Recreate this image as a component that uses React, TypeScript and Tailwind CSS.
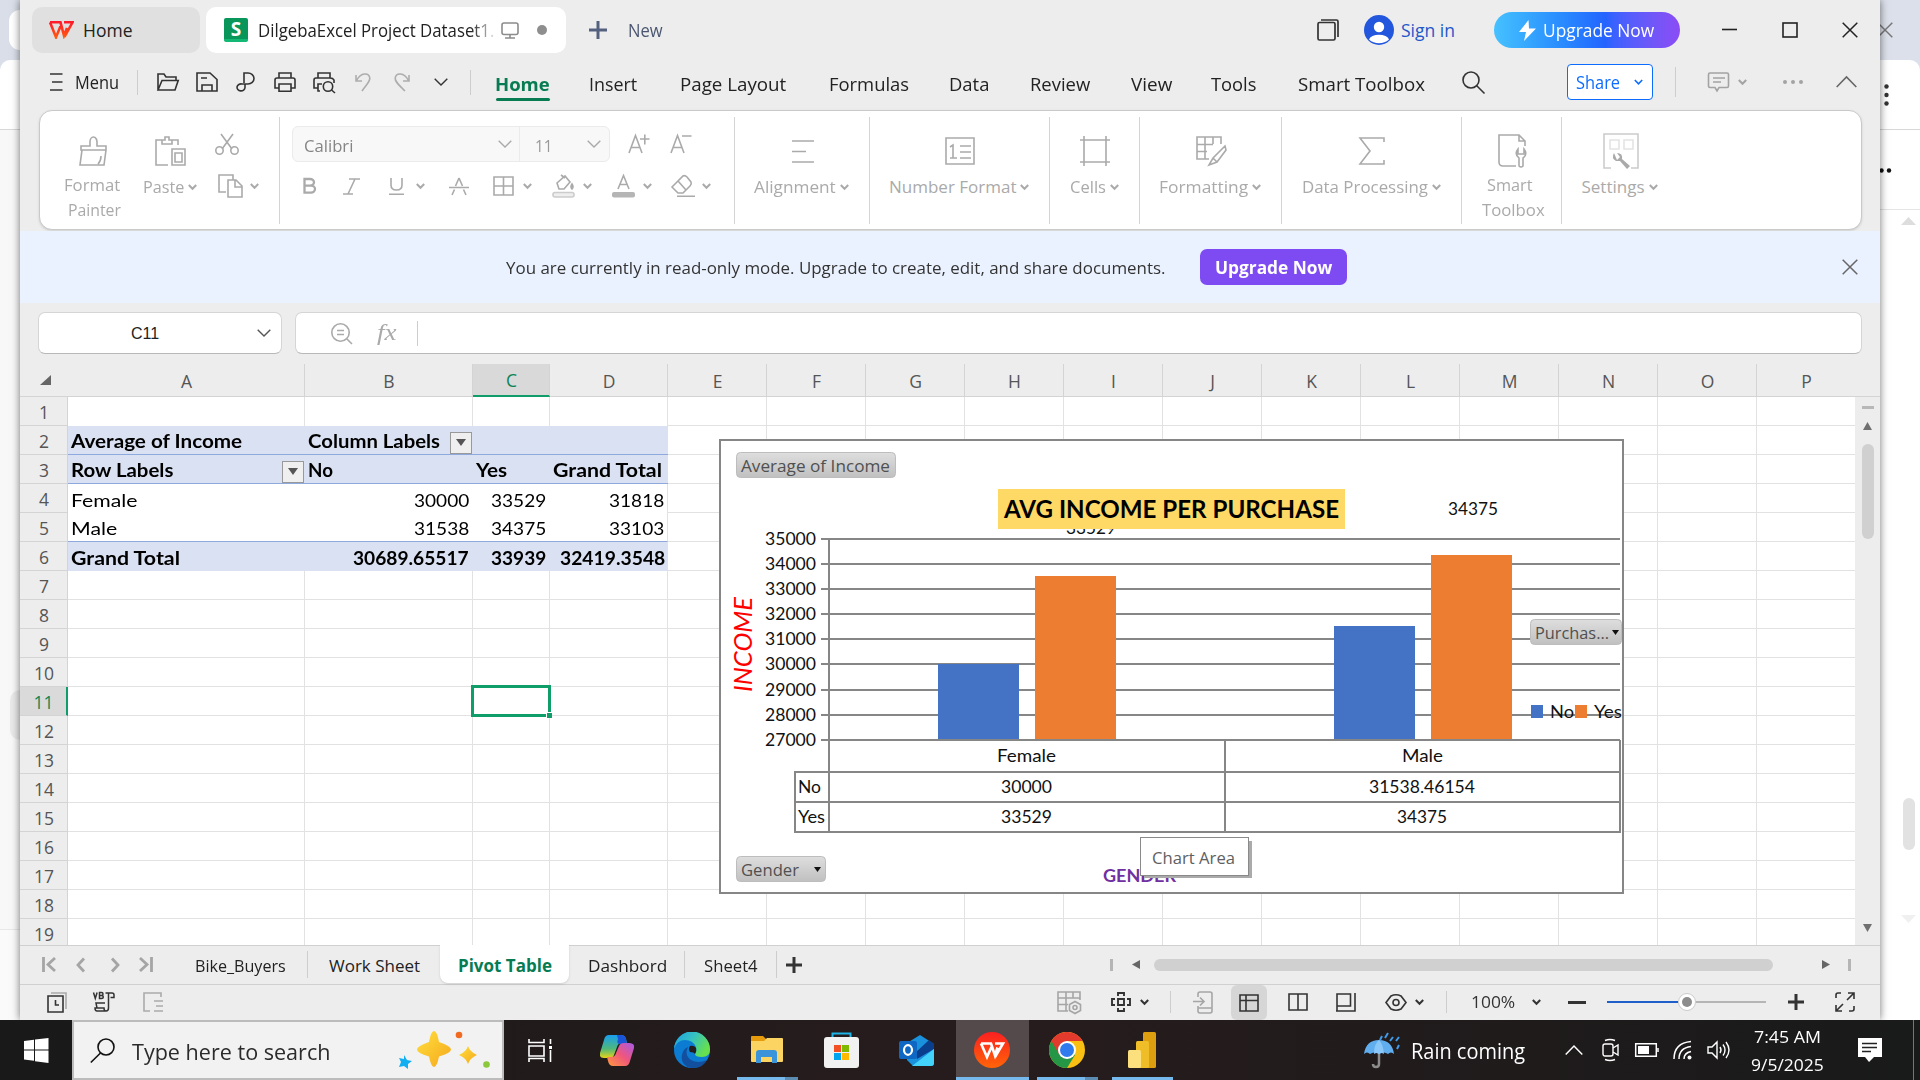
import React, { useLayoutEffect, useRef, useState } from "react";

/* Text stretched or condensed to a given width, keeping its height. */
function Fit({ w, children, className = "" }: { w: number; children: string; className?: string }) {
  const ref = useRef<HTMLSpanElement>(null);
  const [scale, setScale] = useState(1);
  useLayoutEffect(() => {
    if (ref.current) setScale(w / ref.current.offsetWidth);
  }, [w]);
  return (
    <span className={"inline-block shrink-0 whitespace-nowrap " + className} style={{ width: w }}>
      <span ref={ref} className="inline-block origin-left" style={{ transform: `scaleX(${scale})` }}>
        {children}
      </span>
    </span>
  );
}

type IcProps = { w: number; h: number; className?: string; sw?: number; children: React.ReactNode };
function Ic({ w, h, className = "", sw = 1.6, children }: IcProps) {
  return (
    <svg width={w} height={h} viewBox={`0 0 ${w} ${h}`} className={"shrink-0 overflow-visible " + className} fill="none" stroke="currentColor" strokeWidth={sw}>
      {children}
    </svg>
  );
}

const Chev = ({ className = "" }: { className?: string }) => (
  <Ic w={9} h={6} sw={2} className={className}><path d="M.8 1 4.5 4.8 8.2 1" /></Ic>
);
const BigChev = ({ className = "" }: { className?: string }) => (
  <Ic w={14} h={8} sw={1.4} className={className}><path d="M.7.7 7 7 13.3.7" /></Ic>
);
const Cross = ({ className = "" }: { className?: string }) => (
  <Ic w={16} h={16} sw={1.5} className={className}><path d="M.7.7l14.6 14.6M15.3.7.7 15.3" /></Ic>
);
const Vline = ({ className }: { className: string }) => <div className={"w-px shrink-0 bg-[#cdcdcd] " + className} />;

function TitleBar() {
  return (
    <div className="flex h-[60px] items-center text-[17.5px] leading-6">
      <div className="ml-3 flex h-[46px] w-[168px] items-center rounded-[10px] bg-[#e0e0e0]">
        <svg width="25" height="18" viewBox="0 0 25 18" className="ml-[17px]" fill="none">
          <defs><linearGradient id="wl" x1="0" y1="0" x2="0" y2="1"><stop stopColor="#ff1a2b" /><stop offset="1" stopColor="#ff5a10" /></linearGradient></defs>
          <path d="M1 1.3H11.5L15 14.6 18 7M1 1.3 7 16.2 11.5 5.2M15.5 16 23.5 1.3H15" stroke="url(#wl)" strokeWidth="2.6" />
        </svg>
        <Fit w={49} className="ml-[9px] text-[#222]">Home</Fit>
      </div>
      <div className="ml-1.5 flex h-[46px] w-[360px] items-center rounded-[10px] bg-white">
        <div className="ml-[18px] flex h-6 w-6 items-center justify-center rounded-[2px] border-b-[3px] border-[#12b873] bg-[#09965a] text-[19px] font-bold text-white">S</div>
        <div className="ml-2.5 w-[237px] text-[#222] [mask-image:linear-gradient(to_right,black_90%,transparent_101%)]">
          <Fit w={236}>DilgebaExcel Project Dataset1.</Fit>
        </div>
        <Ic w={18} h={17} className="ml-[6px] text-[#8c8c8c]"><rect x="1" y="1" width="16" height="11.5" rx="2" /><path d="M9 12.5v3M4 16h10" /></Ic>
        <div className="ml-[18px] h-2.5 w-2.5 rounded-full bg-[#8e8e8e]" />
      </div>
      <Ic w={18} h={18} sw={3} className="ml-[23px] text-[#53617f]"><path d="M0 9h18M9 0v18" /></Ic>
      <Fit w={35} className="ml-[21px] text-[#4a5670]">New</Fit>
      <Ic w={22} h={22} sw={1.7} className="ml-[654px] text-[#333]"><rect x="1" y="3.500" width="17" height="17.500" rx="1.500" /><path d="M4 1h15.500q1.500 0 1.500 1.500V18" /></Ic>
      <svg width="30" height="30" viewBox="0 0 30 30" className="ml-[25px]"><circle cx="15" cy="15" r="15" fill="#2257dd" /><circle cx="15" cy="12" r="5.200" fill="#fff" /><path d="M5 24.500a10.200 6 0 0 1 20 0 15 15 0 0 1-20 0z" fill="#fff" /></svg>
      <Fit w={54} className="ml-[7px] text-[#2257c9]">Sign in</Fit>
      <div className="ml-[39px] flex h-9 w-[186px] items-center rounded-full bg-gradient-to-r from-[#46c1ff] via-[#2563ff] via-60% to-[#8b4cf5] text-white">
        <svg width="17" height="21" viewBox="0 0 17 21" className="ml-[25px]"><path d="M9.500 0 0 12h7l-2 9L17 8.500h-7z" fill="#fff" /></svg>
        <Fit w={111} className="ml-[7px]">Upgrade Now</Fit>
      </div>
      <Ic w={15} h={16} className="ml-[42px] text-[#222]"><path d="M0 7.500h15" /></Ic>
      <Ic w={16} h={16} sw={1.6} className="ml-[45px] text-[#222]"><rect x="1" y="1" width="14" height="14" /></Ic>
      <Cross className="ml-[44px] text-[#222]" />
    </div>
  );
}

const menuTabs: [string, number, string][] = [
  ["Insert", 48, "ml-[39px]"],
  ["Page Layout", 106, "ml-[43px]"],
  ["Formulas", 80, "ml-[43px]"],
  ["Data", 40, "ml-[40px]"],
  ["Review", 60, "ml-[41px]"],
  ["View", 41, "ml-[41px]"],
  ["Tools", 45, "ml-[39px]"],
  ["Smart Toolbox", 127, "ml-[42px]"],
];

function MenuRow() {
  return (
    <div className="flex h-[44px] items-center text-[17.5px] leading-6 text-[#333]">
      <Ic w={13} h={18} className="ml-[30px]"><path d="M0 1h12.500M2 9h10.500M0 17h12.500" /></Ic>
      <Fit w={44} className="ml-[12px] text-[#222]">Menu</Fit>
      <Vline className="ml-[18px] h-[25px]" />
      <Ic w={22} h={18} className="ml-[19px]"><path d="M1 17V1h6l2 3h10v3.500M1 17 5 7.500h16.200L18 17z" /></Ic>
      <Ic w={22} h={20} className="ml-[17px]"><path d="M1 1h13l7 6.500V19H1zM6 19v-6h10v6M5 6h6" /></Ic>
      <Ic w={18} h={20} className="ml-[19px]"><path d="M7 11V1h4a6 5.500 0 0 1 0 11H5a4 3.500 0 1 0 3 3.500V12" /></Ic>
      <Ic w={22} h={20} className="ml-[19px]"><path d="M5 6V1h12v5M5 16H1V8q0-2 2-2h16q2 0 2 2v8h-4M5 12h12v7.200H5z" /></Ic>
      <Ic w={23} h={21} className="ml-[17px]"><path d="M5 6V1h12v5M7 19H5V12h4M5 16H1V8q0-2 2-2h14q3 0 4 2v3" /><circle cx="15" cy="14.500" r="4.700" /><path d="m18.500 18 3.500 3" /></Ic>
      <Ic w={16} h={18} className="ml-[19px] text-[#adadad]"><path d="M1 2v6h6M1.500 7.500C6-1 14-.5 14.800 5 15 9 11 12 7 18" /></Ic>
      <Ic w={16} h={18} className="ml-[23px] text-[#adadad]"><path d="M15 2v6H9M14.500 7.500C10-1 2-.5 1.200 5 1 9 5 12 11 18" /></Ic>
      <BigChev className="ml-[24px]" />
      <Vline className="ml-[22px] h-[25px]" />
      <div className="mt-[9px] ml-[24px] flex flex-col items-center">
        <Fit w={55} className="font-bold text-[#077c52]">Home</Fit>
        <div className="mt-[2px] h-[3px] w-[54px] rounded bg-[#077c52]" />
      </div>
      {menuTabs.map(([t, w, m]) => (
        <div key={t} className={"pt-1 text-[#222] " + m}><Fit w={w}>{t}</Fit></div>
      ))}
      <Ic w={23} h={23} className="ml-[37px]"><circle cx="9" cy="9" r="8" /><path d="m14.500 14.500 8 8" /></Ic>
      <div className="ml-[82px] flex h-9 w-[86px] items-center rounded-[4px] border border-[#0b6cff] bg-white text-[#0b6cff]">
        <Fit w={44} className="ml-[8px]">Share</Fit>
        <Ic w={9} h={6} className="ml-[14px]"><path d="M.8 1 4.500 4.800 8.200 1" /></Ic>
      </div>
      <Vline className="ml-[22px] h-[30px]" />
      <Ic w={21} h={20} className="ml-[32px] text-[#a3a3a3]"><path d="M2 1h17q1.500 0 1.500 1.500V14q0 1.500-1.500 1.500h-8l-2 3.500-2-3.500H2q-1.500 0-1.500-1.500V2.500Q.5 1 2 1zM5 6h12M5 10h8" /></Ic>
      <Chev className="ml-[9px] text-[#a3a3a3]" />
      <Ic w={20} h={4} className="ml-[36px] text-[#a3a3a3]"><g fill="currentColor" stroke="none"><circle cx="2" cy="2" r="2" /><circle cx="10" cy="2" r="2" /><circle cx="18" cy="2" r="2" /></g></Ic>
      <Ic w={21} h={12} className="ml-[33px] text-[#666]"><path d="M.7 11 10.500 1l9.800 10" /></Ic>
    </div>
  );
}

function Group({ icon, label, w, width }: { icon: React.ReactNode; label: string; w: number; width: string }) {
  return (
    <div className={"flex shrink-0 flex-col items-center " + width}>
      <div className="mt-[22px] flex h-[36px] items-center">{icon}</div>
      <div className="mt-[5px] flex h-[25px] items-center pr-[2px]">
        <Fit w={w}>{label}</Fit>
        <Chev className="ml-1" />
      </div>
    </div>
  );
}

const Sep = () => <div className="-ml-px mt-[6px] h-[107px] w-px shrink-0 bg-[#d4d4d4]" />;

function Ribbon() {
  return (
    <div className="mt-[6px] ml-[19px] flex h-[120px] w-[1823px] rounded-[13px] border border-[#c9c9c9] bg-white text-[17px] leading-[25px] text-[#aaa] shadow-sm">
      <div className="flex w-[240px] shrink-0">
        <div className="mt-[25px] ml-[24px] flex w-[57px] flex-col items-center">
          <Ic w={29} h={30} className="ml-[2px]"><path d="M2 14V10h9V6a3.500 5 0 1 1 7 0v4h9v4zM3 14 1 29h24l2-15M19 28q3-3 3-8" /></Ic>
          <Fit w={56} className="mt-1.5 mr-px">Format</Fit>
          <Fit w={53} className="ml-1">Painter</Fit>
        </div>
        <div className="mt-[25px] ml-[22px] flex w-[54px] flex-col">
          <Ic w={31} h={30} className="ml-3"><path d="M7 4H1v25h12M17 4h6v5M7 8V4h3V1h4v3h3v4zM17 13h13v16H17zM20 17h7v9h-7z" /></Ic>
          <div className="mt-[8px] flex items-center"><Fit w={41}>Paste</Fit><Chev className="ml-1" /></div>
        </div>
        <div className="mt-[23px] ml-[18px] flex flex-col">
          <Ic w={24} h={21}><path d="m6 0 11 15M18 0 7 15" /><circle cx="4.500" cy="16.500" r="3.700" /><circle cx="19.500" cy="16.500" r="3.700" /></Ic>
          <div className="mt-[19px] ml-[3px] flex items-center">
            <Ic w={25} h={24}><path d="M8 18H1V1h14v5M10 6h8l6 6v11H10zM17 6v7h7" /></Ic>
            <Chev className="ml-[7px]" />
          </div>
        </div>
      </div>
      <Sep />
      <div className="w-[455px] shrink-0">
        <div className="mt-[15px] ml-[12px] flex items-center">
          <div className="flex h-9 w-[318px] items-center rounded-[6px] border border-[#ebebeb] bg-[#f8f8f8]">
            <Fit w={49} className="mt-0.5 ml-[11px] text-[#858585]">Calibri</Fit>
            <BigChev className="ml-[145px]" />
            <div className="ml-[7px] h-full w-px bg-[#ebebeb]" />
            <Fit w={17} className="mt-0.5 ml-[15px] text-[#999]">11</Fit>
            <BigChev className="ml-[35px]" />
          </div>
          <Ic w={22} h={20} className="ml-[18px]"><path d="M1 19 7.500 1.500 14 19M3.500 13.500h8M12 5h9.500M16.800.5v10" /></Ic>
          <Ic w={22} h={20} className="ml-[20px]"><path d="M1 19 7.500 1.500 14 19M3.500 13.500h8M12 2h9.500" /></Ic>
        </div>
        <div className="mt-[12px] ml-[23px] flex h-6 items-center">
          <Ic w={13} h={16} sw={2.300}><path d="M1.500 1H7a4 3.300 0 0 1 0 6.600H1.500zM1.500 7.600H8a4 3.500 0 0 1 0 7H1.500z" /></Ic>
          <Ic w={17} h={17} className="ml-[27px]"><path d="M6 1h11M0 16h10M12 1 5 16" /></Ic>
          <Ic w={15} h={17} className="ml-[29px]"><path d="M2 0v7q0 5 5.500 5T13 7V0M0 16.300h15" /></Ic>
          <Chev className="ml-[12px]" />
          <Ic w={20} h={18} className="ml-[24px]"><path d="M0 10.500h20M10 1 6.500 9M10 1l3.500 8M5.500 12.500 3 18M14.500 12.500 17 18" /></Ic>
          <Ic w={21} h={20} className="ml-[24px]"><path d="M1 1h19v18H1zM10.500 1v18M1 10h19" /></Ic>
          <Chev className="ml-[9px]" />
          <Ic w={23} h={24} className="ml-[20px]"><path d="M5 9 13 2l5 6-6 7H7zM9 1l4 3" /><path d="M20 10q2 3 0 5-2-2 0-5z" fill="currentColor" /><rect x="1" y="18.500" width="21" height="4.500" rx="2" fill="#eee" stroke="#ccc" /></Ic>
          <Chev className="ml-[8px]" />
          <Ic w={23} h={24} className="ml-[20px]"><path d="M6 15 11.500 1.500 17 15M8 10.500h7" /><rect x="0" y="18" width="23" height="5.500" rx="2" fill="#b5b5b5" stroke="none" /></Ic>
          <Chev className="ml-[8px]" />
          <Ic w={24} h={22} className="ml-[19px]"><path d="m1 12 11-11q2-1 4 1l4 5q1 2-1 4l-7 7H7zM7 6l8 9M6 21.300h18" /></Ic>
          <Chev className="ml-[7px]" />
        </div>
      </div>
      <Sep />
      <Group width="w-[135px]" label="Alignment" w={82} icon={<Ic w={22} h={23}><path d="M0 1h22M0 11.500h14M0 22h22" /></Ic>} />
      <Sep />
      <Group width="w-[180px]" label="Number Format" w={127} icon={<Ic w={30} h={28}><path d="M1 1h28v26H1zM5 10l3-2v13M5 21h7M15 9h11M15 15h11M15 21h11" /></Ic>} />
      <Sep />
      <Group width="w-[90px]" label="Cells" w={36} icon={<Ic w={30} h={30}><path d="M4 0v30M26 0v30M0 4h30M0 26h30" /></Ic>} />
      <Sep />
      <Group width="w-[142px]" label="Formatting" w={89} icon={<Ic w={30} h={30}><path d="M13 23H1V1h24v7M1 8.500h16M1 15.500h10M9 1v22M17 1v7M29 10 17 22l-4 7 8-3 9-12zM17 22l4 4" /></Ic>} />
      <Sep />
      <Group width="w-[180px]" label="Data Processing" w={126} icon={<Ic w={26} h={28}><path d="M25 5V1H1l10 13L1 27h24v-4" /></Ic>} />
      <Sep />
      <div className="flex w-[100px] shrink-0 flex-col items-center">
        <Ic w={31} h={35} className="mt-[22px] ml-0.5"><path d="M18 33H5q-4 0-4-4V2h20l6 6v5M21 2v6h6M20 16q-4 5 1 9v8q2 2 4 0v-8q5-4 1-9v5h-6z" /></Ic>
        <Fit w={46} className="mt-1 mr-1">Smart</Fit>
        <Fit w={63} className="ml-[2px]">Toolbox</Fit>
      </div>
      <Sep />
      <Group width="w-[117px]" label="Settings" w={63} icon={
        <Ic w={36} h={36}>
          <path d="M8 35H1V1h34v34h-7" stroke="#ccc" />
          <path d="M7 7h9v9H7zM21 7h9v9h-9z" stroke="#e4e4e4" />
          <path d="M11 20q-3 5 2 8l4 0 7 8 3-3-8-7q1-6-5-6l3 4-3 3z" fill="currentColor" stroke="none" />
        </Ic>} />
    </div>
  );
}

function Banner() {
  return (
    <div className="mt-px flex h-[72px] items-center bg-[#ebf2ff] text-[17px] leading-6">
      <Fit w={659} className="mt-0.5 ml-[486px] text-[#333]">You are currently in read-only mode. Upgrade to create, edit, and share documents.</Fit>
      <div className="ml-[35px] flex h-9 w-[147px] items-center justify-center rounded-[7px] bg-[#7e4bf3] font-bold text-white">
        <Fit w={117} className="mt-0.5">Upgrade Now</Fit>
      </div>
      <Cross className="ml-[495px] text-[#666]" />
    </div>
  );
}

function FormulaBar() {
  return (
    <div className="mt-[9px] flex h-[42px] text-[#aaa]">
      <div className="ml-[18px] flex w-[244px] items-center rounded-[7px] border border-[#d5d5d5] border-b-[#b8b8b8] bg-white">
        <Fit w={28} className="mt-0.5 ml-[92px] font-['Liberation_Sans'] text-[16px] text-[#222]">C11</Fit>
        <BigChev className="ml-[98px] text-[#555]" />
      </div>
      <div className="ml-[13px] flex w-[1567px] items-center rounded-[7px] border border-[#d5d5d5] border-b-[#b8b8b8] bg-white">
        <Ic w={22} h={21} className="ml-[35px]"><circle cx="9.500" cy="9.500" r="8.700" /><path d="M6 7.500h7M6 11.500h7M16 16l5 5" /></Ic>
        <Fit w={20} className="ml-[24px] font-['Liberation_Serif'] text-[23px] leading-6 italic">fx</Fit>
        <Vline className="ml-[20px] h-[25px]" />
      </div>
    </div>
  );
}

const colWidths = [
  "w-[237px]", "w-[168px]", "w-[77px]", "w-[118px]", "w-[99px]", "w-[99px]", "w-[99px]", "w-[99px]",
  "w-[99px]", "w-[99px]", "w-[99px]", "w-[99px]", "w-[99px]", "w-[99px]", "w-[99px]", "w-[98px]",
];
const letters = "ABCDEFGHIJKLMNOP".split("");

type Cell = { t: string; w: number; r?: boolean; drop?: boolean };
const pivot: Record<number, (Cell | null)[]> = {
  2: [{ t: "Average of Income", w: 171 }, { t: "Column Labels", w: 132, drop: true }, null, null],
  3: [{ t: "Row Labels", w: 102, drop: true }, { t: "No", w: 25 }, { t: "Yes", w: 31 }, { t: "Grand Total", w: 109 }],
  4: [{ t: "Female", w: 66 }, { t: "30000", w: 55, r: true }, { t: "33529", w: 55, r: true }, { t: "31818", w: 55, r: true }],
  5: [{ t: "Male", w: 46 }, { t: "31538", w: 55, r: true }, { t: "34375", w: 55, r: true }, { t: "33103", w: 55, r: true }],
  6: [{ t: "Grand Total", w: 109 }, { t: "30689.65517", w: 116, r: true }, { t: "33939", w: 55, r: true }, { t: "32419.3548", w: 105, r: true }],
};

function cellLook(row: number, col: number) {
  if (col < 4 && row > 1 && row < 7) {
    if (row === 2 || row === 3) return "bg-[#d9e1f2] border-b border-[#8ea9db] font-bold";
    if (row === 6) return "bg-[#d9e1f2] font-bold";
    return "bg-white " + (row === 5 ? "border-b border-b-[#8ea9db] " : "") + (col === 3 ? "border-r border-r-[#e2e2e2]" : "");
  }
  if (col < 4 && row === 1) return "bg-white border-r border-[#e2e2e2]";
  if (col === 15) return "bg-white border-b border-[#e2e2e2]";
  return "bg-white border-r border-b border-[#e2e2e2]";
}

const Drop = () => (
  <div className="mt-[5px] mr-px ml-auto flex h-[22px] w-[22px] shrink-0 items-center justify-center border border-[#999] bg-[#efefef]">
    <svg width="10" height="7" viewBox="0 0 10 7"><path d="M0 0h10L5 7z" fill="#555" /></svg>
  </div>
);

function Sheet() {
  return (
    <div className="relative mt-[10px] flex h-[581px]">
      <div className="h-[581px] w-[1835px] overflow-hidden">
        <div className="flex h-[33px] border-b border-[#d4d4d4] text-[17.500px] text-[#555]">
          <div className="flex w-[48px] shrink-0 items-center pl-5"><svg width="11" height="10" viewBox="0 0 11 10"><path d="M11 0v10H0z" fill="#666" /></svg></div>
          {letters.map((l, i) => (
            <div key={l} className={"flex shrink-0 items-center justify-center border-r border-[#d4d4d4] pt-[2px] pl-px " + colWidths[i] + (l === "C" ? " h-[33px] border-b-2 border-b-[#0f9d6a] bg-[#d9d9d9] text-[#0c8457]" : i === 15 ? " border-r-0" : "")}>{l}</div>
          ))}
        </div>
        {Array.from({ length: 19 }, (_, k) => k + 1).map((row) => (
          <div key={row} className="flex h-[29px]">
            <div className={"flex w-[48px] shrink-0 items-center justify-center border-b border-[#d4d4d4] pt-[2px] pl-px text-[17.500px] " + (row === 11 ? "border-r-2 border-r-[#0f9d6a] bg-[#dadada] text-[#0c8457]" : "border-r text-[#555]")}>{String(row)}</div>
            {colWidths.map((w, col) => {
              const c = pivot[row]?.[col];
              const sel = row === 11 && col === 2;
              return (
                <div key={col} className={"relative flex shrink-0 items-center font-[Lato] text-[18px] leading-6 text-black " + w + " " + cellLook(row, col) + (c?.r ? " justify-end " + (col === 3 ? "pr-[3px]" : "pr-[4px]") : " pl-[3px]")}>
                  {c && <Fit w={c.w} className="mt-[2px]">{c.t}</Fit>}
                  {c?.drop && <Drop />}
                  {sel && (
                    <div className="absolute -top-[2px] -left-[2px] z-10 h-[32px] w-[80px] border-[3px] border-[#0f9d6a]">
                      <div className="absolute -right-[4px] -bottom-[4px] h-[6px] w-[6px] border-t border-l border-white bg-[#0f9d6a]" />
                    </div>
                  )}
                </div>
              );
            })}
          </div>
        ))}
      </div>
      <div className="mt-[32px] flex w-[25px] flex-col items-center border-t border-[#d4d4d4] bg-[#ededed] pt-[9px]">
        <div className="h-[3px] w-3 bg-[#b8b8b8]" />
        <svg width="9" height="8" viewBox="0 0 9 8" className="mt-[13px]"><path d="M4.500 0 9 8H0z" fill="#707070" /></svg>
        <div className="mt-[14px] h-[95px] w-3 rounded-full bg-[#d0d0d0]" />
        <svg width="9" height="8" viewBox="0 0 9 8" className="mt-[385px]"><path d="M4.500 8 9 0H0z" fill="#707070" /></svg>
      </div>
      <div className="absolute top-[75px] left-[699px]"><Chart /></div>
    </div>
  );
}

function T({ x, y, w, s = 16.5, f = "#111", b, children }: { x: number; y: number; w: number; s?: number; f?: string; b?: boolean; children: string }) {
  return <text x={x} y={y} textLength={w} lengthAdjust="spacingAndGlyphs" fontSize={s} fill={f} fontWeight={b ? 700 : 400}>{children}</text>;
}

function PivotButton({ x, y, w, tw, arrow, children }: { x: number; y: number; w: number; tw: number; arrow?: number; children: string }) {
  return (
    <g className="font-['Open_Sans']">
      <rect x={x + 0.5} y={y + 0.5} width={w - 1} height={25} rx={4} fill="url(#pb)" stroke="#bdbdbd" />
      <T x={x + 5} y={y + 20} w={tw} s={17} f="#505050">{children}</T>
      {arrow && <path d={`M${arrow} ${y + 11}h7l-3.500 5z`} fill="#111" />}
    </g>
  );
}

const ticks = [539, 564, 589, 614, 639, 664, 690, 715, 740];

function Chart() {
  return (
    <svg width="905" height="455" viewBox="719 439 905 455" className="font-[Lato]">
      <defs><linearGradient id="pb" x1="0" y1="0" x2="0" y2="1"><stop stopColor="#dedede" /><stop offset="1" stopColor="#c0c0c0" /></linearGradient></defs>
      <rect x="720" y="440" width="903" height="453" fill="#fff" stroke="#868686" strokeWidth="2" />
      <path d={ticks.map((y) => `M821 ${y}H1620`).join("")} stroke="#868686" strokeWidth="2" />
      <rect x="938" y="664" width="81" height="75" fill="#4472c4" />
      <rect x="1035" y="576" width="81" height="163" fill="#ed7d31" />
      <rect x="1334" y="626" width="81" height="113" fill="#4472c4" />
      <rect x="1431" y="555" width="81" height="184" fill="#ed7d31" />
      <path d="M829 538V832M795 772H1620M795 802H1620M794 832H1621M795 771V832M1225 740V832M1620 740V832" stroke="#868686" strokeWidth="2" />
      {ticks.map((y, i) => <T key={y} x={765} y={y + 5.5} w={51}>{String(35000 - i * 1000)}</T>)}
      <T x={997} y={762} w={59}>Female</T>
      <T x={1402} y={762} w={41}>Male</T>
      <T x={798} y={793} w={23}>No</T>
      <T x={798} y={823} w={27}>Yes</T>
      <T x={1001} y={793} w={51}>30000</T>
      <T x={1001} y={823} w={51}>33529</T>
      <T x={1369} y={793} w={106}>31538.46154</T>
      <T x={1397} y={823} w={50}>34375</T>
      <T x={1066} y={534} w={50}>33529</T>
      <T x={1448} y={515} w={50}>34375</T>
      <rect x="998" y="489" width="347" height="40" fill="#ffd966" />
      <T x={1004} y={518} w={335} s={25} f="#000" b>AVG INCOME PER PURCHASE</T>
      <text transform="translate(752 692) rotate(-90)" textLength="95" lengthAdjust="spacingAndGlyphs" fontSize="25" fill="#f00" fontStyle="italic">INCOME</text>
      <T x={1103} y={882} w={73} f="#7030a0" b>GENDER</T>
      <PivotButton x={736} y={452} w={160} tw={149}>Average of Income</PivotButton>
      <PivotButton x={736} y={856} w={90} tw={58} arrow={814}>Gender</PivotButton>
      <PivotButton x={1530} y={619} w={92} tw={74} arrow={1612}>Purchas...</PivotButton>
      <rect x="1531" y="705" width="12" height="13" fill="#4472c4" />
      <T x={1550} y={718} w={24}>No</T>
      <rect x="1575" y="705" width="12" height="13" fill="#ed7d31" />
      <T x={1594} y={718} w={28}>Yes</T>
      <rect x="1144" y="841" width="108" height="37" fill="#aaa" />
      <rect x="1140.5" y="837.500" width="108" height="38" fill="#fff" stroke="#8a8a8a" />
      <g className="font-['Open_Sans']"><T x={1152} y={864} w={83} s={17} f="#606060">Chart Area</T></g>
    </svg>
  );
}

function SheetTabs() {
  return (
    <div className="flex h-[40px] border-t border-b border-[#d0d0d0] text-[17px] leading-6 text-[#222]">
      <div className="flex h-[37px] items-center text-[#a5a5a5]">
        <Ic w={14} h={15} sw={2.800} className="ml-[22px]"><path d="M1.500 0v15M13 1 6 7.500l7 6.500" /></Ic>
        <Ic w={8} h={14} sw={2.800} className="ml-[21px]"><path d="M7 .5 1 7l6 6.500" /></Ic>
        <Ic w={8} h={14} sw={2.800} className="ml-[26px]"><path d="m1 .5 6 6.500-6 6.500" /></Ic>
        <Ic w={14} h={15} sw={2.800} className="ml-[20px]"><path d="M12.500 0v15M1 1l7 6.500L1 14" /></Ic>
      </div>
      <Fit w={91} className="mt-[8px] ml-[42px]">Bike_Buyers</Fit>
      <Vline className="mt-[5px] ml-[21px] h-[27px]" />
      <Fit w={91} className="mt-[8px] ml-[21px]">Work Sheet</Fit>
      <div className="-mt-px ml-[20px] flex h-[38px] w-[129px] items-center justify-center rounded-b-[8px] bg-white font-bold text-[#077c52] shadow-sm">
        <Fit w={94} className="mt-[3px] -mr-px">Pivot Table</Fit>
      </div>
      <Fit w={79} className="mt-[8px] ml-[19px]">Dashbord</Fit>
      <Vline className="mt-[5px] ml-[17px] h-[27px]" />
      <Fit w={54} className="mt-[8px] ml-[19px]">Sheet4</Fit>
      <Vline className="mt-[5px] ml-[18px] h-[27px]" />
      <Ic w={16} h={16} sw={3} className="mt-[11px] ml-[9px] text-[#333]"><path d="M0 8h16M8 0v16" /></Ic>
      <div className="ml-[308px] flex h-[37px] items-center">
        <div className="h-3 w-[3px] bg-[#b5b5b5]" />
        <svg width="8" height="9" viewBox="0 0 8 9" className="ml-[19px]"><path d="M8 0v9L0 4.500z" fill="#666" /></svg>
        <div className="ml-[14px] h-3 w-[619px] rounded-full bg-[#d0d0d0]" />
        <svg width="8" height="9" viewBox="0 0 8 9" className="ml-[49px]"><path d="M0 0v9l8-4.500z" fill="#666" /></svg>
        <div className="ml-[18px] h-3 w-[3px] bg-[#b5b5b5]" />
      </div>
    </div>
  );
}

function StatusBar() {
  return (
    <div className="flex h-[35px] items-center pb-px text-[17px] text-[#333]">
      <Ic w={20} h={21} className="ml-[27px]"><path d="M1 4h15v16H1z" /><path d="M4 1h15v16" stroke="#aaa" /><path d="M8.500 8v5H12" /></Ic>
      <svg width="22" height="20" viewBox="0 0 22 20" className="ml-[26px] overflow-visible" fill="none" stroke="#333" strokeWidth="1.500">
        <path d="m.5 .5 1.800 6 1.800-6M6.500 .5v6h2q1.800 0 1.800-1.500T8.500 3.500h-2 2q1.500 0 1.500-1.500T8.500 .5zM12.500 1h6.500q2 0 2 2v2.500h-3.500M15.500 1v15q0 3-2.500 3H4q-2 0-2-3h9q0 3 2 3M4 16l-1-5h9" />
      </svg>
      <Ic w={20} h={20} className="ml-[28px] text-[#aaa]"><path d="M18 5V1H1v18h6M11 9h9M13 14h7M11 19h9" /></Ic>
      <Ic w={24} h={23} className="ml-[894px] text-[#a5a5a5]"><path d="M11 20H1V1h22v8M1 7h22M1 13.500h10M9 1v19M16 1v6M18 10.500l5.500 3v6l-5.500 3-5.500-3v-6z" /><circle cx="18" cy="16.500" r="2" /></Ic>
      <Ic w={20} h={20} sw={1.900} className="ml-[30px]"><path d="M7 7h6v6H7zM7 4V1h6v3M7 16v3h6v-3M4 7H1v6h3M16 7h3v6h-3" /></Ic>
      <Chev className="ml-[9px]" />
      <Vline className="ml-[21px] h-[22px]" />
      <Ic w={20} h={23} className="ml-[22px] text-[#a5a5a5]"><path d="M5 6V3q0-2 2-2h10q2 0 2 2v17q0 2-2 2H7q-2 0-2-2v-5M5 17h14M0 10.500h11M7 6.500l4 4-4 4" /></Ic>
      <div className="mt-px ml-[18px] flex h-[35px] w-9 items-center justify-center rounded-[6px] bg-[#d6d6d6]">
        <Ic w={20} h={18}><path d="M1 1h18v16H1zM7 1v16M1 6.500h18" /></Ic>
      </div>
      <Ic w={20} h={18} className="ml-[21px]"><path d="M1 1h18v16H1zM10 1v16" /></Ic>
      <Ic w={20} h={19} className="ml-[28px]"><path d="M1 1h13.500v12H1zM19 0v18H0M1 13v5" /></Ic>
      <Ic w={22} h={17} className="ml-[29px]"><path d="M1 8.500 6 2q5-2.500 10 0l5 6.500-5 6.500q-5 2.500-10 0z" /><circle cx="11" cy="8.500" r="3" /></Ic>
      <Chev className="ml-[8px]" />
      <Vline className="ml-[22px] h-[22px]" />
      <Fit w={44} className="ml-[24px]">100%</Fit>
      <Chev className="ml-[17px]" />
      <div className="ml-[27px] h-[3px] w-[18px] bg-[#333]" />
      <div className="ml-[21px] flex w-[159px] items-center">
        <div className="h-[2px] w-[71px] bg-[#1f5fc9]" />
        <div className="flex h-[18px] w-[18px] items-center justify-center rounded-full border border-[#ccc] bg-white"><div className="h-2.5 w-2.5 rounded-full bg-[#8c8c8c]" /></div>
        <div className="h-[2px] w-[70px] bg-[#b5b5b5]" />
      </div>
      <Ic w={16} h={16} sw={3} className="ml-[22px]"><path d="M0 8h16M8 0v16" /></Ic>
      <Ic w={20} h={20} className="ml-[31px]"><path d="M1 6V3q0-2 2-2h3M19 14v3q0 2-2 2h-3M13 1h6v6M19 1l-7 7M7 19H1v-6M1 19l7-7" /></Ic>
    </div>
  );
}

function BackgroundLeft() {
  return (
    <div className="flex w-5 shrink-0 flex-col bg-[#d9dee8]">
      <div className="mt-[10px] ml-[9px] h-10 rounded-l-[12px] bg-white" />
      <div className="mt-[10px] h-[70px] rounded-tl-[10px] border-b border-[#d8d8d8] bg-white" />
      <div className="h-[800px] border-b border-[#e8e8e8] bg-[#f8f8f8] pt-[560px]"><div className="ml-[10px] h-[50px] rounded-l-[10px] bg-[#e9e9e9]" /></div>
      <div className="flex-1 bg-[#fafafa]" />
    </div>
  );
}

function BackgroundRight() {
  return (
    <div className="w-10 shrink-0 bg-[#dbe0ea] text-[#777]">
      <div className="flex h-[60px] items-center overflow-hidden"><Cross className="-ml-[3px]" /></div>
      <div className="flex h-[70px] justify-center rounded-tr-[10px] border-b border-[#d8d8d8] bg-white pt-[24px] pr-[27px]">
        <svg width="5" height="22" viewBox="0 0 5 22" fill="#333"><circle cx="2.500" cy="2.500" r="2.200" /><circle cx="2.500" cy="11" r="2.200" /><circle cx="2.500" cy="19.500" r="2.200" /></svg>
      </div>
      <div className="h-[80px] border-b border-[#e5e5e5] bg-white pt-[38px]">
        <svg width="13" height="5" viewBox="0 0 13 5" fill="#111"><circle cx="1.500" cy="2.500" r="2.200" /><circle cx="9" cy="2.500" r="2.200" /></svg>
      </div>
      <div className="flex h-[810px] flex-col items-end bg-white pr-[5px]">
        <svg width="15" height="8" viewBox="0 0 15 8" className="mt-[7px] -mr-px"><path d="M7.500 0 15 8H0z" fill="#ddd" /></svg>
        <div className="mt-[573px] h-[52px] w-3 rounded-full bg-[#e2e2e2]" />
        <svg width="15" height="8" viewBox="0 0 15 8" className="mt-[65px] -mr-px"><path d="M7.500 8 15 0H0z" fill="#f0f0f0" /></svg>
      </div>
    </div>
  );
}

const Win = () => (
  <svg width="25" height="25" viewBox="0 0 25 25" className="ml-[24px] shrink-0" fill="#fff"><path d="M0 3 10 1.700V11.500H0zM11 1.600 24.500 0v11.500H11zM0 12.500h10v10.300L0 21.500zM11 12.500h13.500V25L11 23.200z" /></svg>
);

function Sparkles() {
  return (
    <svg width="92" height="38" viewBox="397 1031 92 38" className="ml-[69px] shrink-0">
      <defs><linearGradient id="sp" x1="0" y1="0" x2="1" y2="1"><stop stopColor="#ffdf3d" /><stop offset="1" stopColor="#f5a81c" /></linearGradient></defs>
      <path d="M432 1031q3 0 5 11 12 4 12 7.500t-12 7q-2 10.500-5 10.500t-5-10.500q-12-3.500-12-7t12-7.500q2-11 5-11z" fill="url(#sp)" />
      <path d="M466 1046q2 6 9 9-7 3-9 9-2-6-9-9 7-3 9-9z" fill="url(#sp)" />
      <path d="M402 1055l3 5 5 1-4 3 0 5-4-3-5 1 2-5-2-4 5 1z" fill="#12aef2" />
      <circle cx="457" cy="1035" r="3.300" fill="#f26a21" /><circle cx="484.500" cy="1064.500" r="3.300" fill="#8cc83c" />
    </svg>
  );
}

function Taskbar() {
  return (
    <div className="relative flex h-[60px] items-center bg-gradient-to-r from-[#191919] via-[#271c1d] via-50% to-[#191a1a] text-white">
      <Win />
      <div className="ml-[23px] flex h-[60px] w-[432px] items-center border-2 border-[#bcbcbc] bg-[#f2f2f2]">
        <Ic w={25} h={25} className="ml-[16px] text-[#111]"><circle cx="16" cy="9" r="8" /><path d="M10.500 15 .8 24.500" /></Ic>
        <Fit w={198} className="mt-[2px] ml-[17px] text-[22px] text-[#2b2b2b]">Type here to search</Fit>
        <Sparkles />
      </div>
      <Ic w={24} h={23} className="ml-[24px]"><path d="M1 7h15v10H1zM1 0v3.500h15V0M1 23v-3.500h15V23M22.500 0v5M22.500 11v12" /><path d="M21 7h3v3h-3z" fill="#fff" stroke="none" /></Ic>
      <svg width="34" height="31" viewBox="0 0 34 31" className="ml-[48px]">
        <defs>
          <linearGradient id="c1" x1="0" y1="0" x2="0" y2="1"><stop stopColor="#199ff0" /><stop offset=".6" stopColor="#4fb87a" /><stop offset="1" stopColor="#e8d319" /></linearGradient>
          <linearGradient id="c2" x1="1" y1="0" x2="0" y2="1"><stop stopColor="#a65ae8" /><stop offset=".5" stopColor="#f0567c" /><stop offset="1" stopColor="#ff9b3d" /></linearGradient>
        </defs>
        <path d="M9 0h12q4 0 5 4l1 4h-5q-4 0-5 4l-3 8q-1 3-4 3H4q-5 0-4-5L4 5q1-5 5-5z" fill="url(#c1)" />
        <path d="M17 0h4q4 0 5 4l1 5h-7q-4 0-2-5z" fill="#1a55d8" />
        <path d="M25 31H13q-4 0-5-5l-1-4h4q4 0 5-4l3-7q1-3 5-3h5q6 0 5 5l-4 13q-1 5-5 5z" fill="url(#c2)" />
      </svg>
      <svg width="36" height="36" viewBox="0 0 36 36" className="ml-[40px]">
        <defs><linearGradient id="e1" x1="0" y1="0" x2="1" y2=".5"><stop stopColor="#1b9de2" /><stop offset=".5" stopColor="#35c1c4" /><stop offset="1" stopColor="#66e04e" /></linearGradient></defs>
        <circle cx="18" cy="18" r="18" fill="#0c7bd2" />
        <path d="M0 17A18 18 0 0 1 36 18q0 7-8 7-7 0-7-3 2-3 1-7-3-7-11-7Q3 8 0 17z" fill="url(#e1)" />
        <path d="M14 15q-4 8 3 13 7 4 16 0-5 9-16 8-11-3-9-13 1-6 6-8z" fill="#124f9e" />
        <path d="M21 22q-1-2-5-2-2-3 0-6 4-1 6 2 1 3-1 6z" fill="#231b1c" />
      </svg>
      <svg width="32" height="28" viewBox="0 0 32 28" className="ml-[41px]"><path d="M0 1q0-1 1-1h11l3 3v4H0z" fill="#e59b0b" /><path d="M0 5h13l3-3h15q1 0 1 1v22q0 1-1 1H1q-1 0-1-1z" fill="#fcd462" /><path d="M5 27V17q0-3 3-3h15q3 0 3 3v10h-5v-6H10v6z" fill="#3b93d9" /></svg>
      <svg width="35" height="36" viewBox="0 0 35 36" className="ml-[41px]"><path d="M8.500 7V1.500h18V7" stroke="#1fb4e8" strokeWidth="2" fill="none" /><rect y="5" width="35" height="31" rx="3" fill="#f1f1f1" /><path d="M10 13h7v7h-7z" fill="#f25022" /><path d="M18 13h7v7h-7z" fill="#7fba00" /><path d="M10 21h7v7h-7z" fill="#00a4ef" /><path d="M18 21h7v7h-7z" fill="#ffb900" /></svg>
      <svg width="36" height="31" viewBox="0 0 36 31" className="ml-[40px]"><path d="M8 8 21 0l14 9v19q0 3-3 3H14l-6-6z" fill="#1a91dd" /><path d="M16 18 30 5l5 4v5L18 24z" fill="#0a3f8e" /><path d="M13 31 35 14v14q0 3-3 3z" fill="#43d3fa" /><rect y="6" width="18" height="18" rx="2" fill="#0f67c4" /><ellipse cx="9" cy="15" rx="4" ry="4.800" fill="none" stroke="#fff" strokeWidth="2.200" /></svg>
      <div className="ml-[21px] flex h-[60px] w-[73px] items-center justify-center bg-[#544a4b]">
        <svg width="36" height="36" viewBox="0 0 36 36" className="-ml-px"><defs><linearGradient id="wp" x1="0" y1="0" x2="0" y2="1"><stop stopColor="#fb2020" /><stop offset="1" stopColor="#ff6408" /></linearGradient></defs><circle cx="18" cy="18" r="18" fill="url(#wp)" /><path d="M7 11.500h10l4 12 2.500-8M7 11.500 13 25l4.500-10M21 25l8-13.500h-8" stroke="#fff" strokeWidth="2.600" fill="none" /></svg>
      </div>
      <svg width="36" height="36" viewBox="0 0 36 36" className="ml-[20px]"><circle cx="18" cy="18" r="18" fill="#f9c013" /><path d="M18 18 2.400 9A18 18 0 0 0 18 36l8-13z" fill="#249645" /><path d="M2.400 9a18 18 0 0 1 31.200 0H18l-8 13z" fill="#e23b2e" /><circle cx="18" cy="18" r="9" fill="#fff" /><circle cx="18" cy="18" r="7" fill="#2f7bee" /></svg>
      <svg width="28" height="36" viewBox="0 0 28 36" className="ml-[43px]"><rect x="15" width="13" height="36" rx="1.500" fill="#dd9f10" /><rect x="8" y="9" width="13" height="27" rx="1.500" fill="#efbd28" /><rect y="18" width="13" height="18" rx="1.500" fill="#fbe07d" /></svg>
      <svg width="36" height="37" viewBox="0 0 36 37" className="ml-[208px]"><path d="M15 20v12q0 3-3 3t-3-3" stroke="#8c8c8c" strokeWidth="2.500" fill="none" /><path d="M0 22Q2 8 15 8t15 14q-3-3-6 0-4-3-9 0-5-3-9 0-3-3-6 0z" fill="#61aeef" /><path d="M10 22Q10 12 15 8q4 4 5 14-3-2-5 0-2-2-5 0z" fill="#8ac8fa" /><path d="m18 4-2 4M24 1l-3 5M29 5l-3 4M35 5l-3 4M35 13l-2 4" stroke="#3f9be8" strokeWidth="2" /></svg>
      <Fit w={114} className="mt-[3px] ml-[11px] text-[21px]">Rain coming</Fit>
      <Ic w={18} h={10} sw={1.500} className="ml-[40px]"><path d="M.7 9.500 9 1l8.300 8.500" /></Ic>
      <Ic w={17} h={22} sw={1.400} className="ml-[19px]"><rect x="1" y="5" width="10" height="12" rx="2" /><path d="m11 9 5-3v10l-5-3M3 1.500q5-2 10 0M3 20.500q5 2 10 0" /></Ic>
      <Ic w={24} h={14} sw={1.500} className="ml-[16px]"><path d="M.7.7h20.600v12.600H.7zM23 5v4" /><path d="M3 3h11v8H3z" fill="#fff" stroke="none" /></Ic>
      <Ic w={20} h={20} sw={1.500} className="ml-[14px]"><path d="M1 19Q1 3 18 1.500M6 19Q6 8 18 6.500M11 19q0-6 7-7.500" /><circle cx="16.500" cy="17.500" r="2" fill="#fff" stroke="none" /></Ic>
      <Ic w={23} h={20} sw={1.400} className="ml-[14px]"><path d="M1 7h4l5-5v16l-5-5H1zM13 7q2 3 0 6M16 4.500q4 5.500 0 11M19 2q6 8 0 16" /></Ic>
      <div className="mt-px ml-[21px] flex w-[73px] flex-col items-center text-[17px] leading-[28px]">
        <Fit w={67}>7:45 AM</Fit>
        <Fit w={73}>9/5/2025</Fit>
      </div>
      <svg width="24" height="25" viewBox="0 0 24 25" className="ml-[34px]"><path d="M0 0h24v19h-8l-5 5-4-5H0z" fill="#fff" /><path d="M4 5.500h15M4 9.500h15M4 13.500h9" stroke="#222" strokeWidth="1.400" /></svg>
      <div className="ml-[31px] h-[60px] w-px bg-[#777]" />
      <div className="absolute bottom-0 left-[737px] flex h-[3px]"><div className="w-[48px] bg-[#76b9ed]" /><div className="w-[13px] bg-[#5d8cb2]" /></div>
      <div className="absolute bottom-0 left-[956px] h-[3px] w-[73px] bg-[#76b9ed]" />
      <div className="absolute bottom-0 left-[1037px] flex h-[3px]"><div className="w-[48px] bg-[#76b9ed]" /><div className="w-[13px] bg-[#5d8cb2]" /></div>
      <div className="absolute bottom-0 left-[1112px] h-[3px] w-[61px] bg-[#76b9ed]" />
    </div>
  );
}

export default function App() {
  return (
    <div className="h-[1080px] w-[1920px] overflow-hidden font-['Open_Sans',sans-serif]">
      <div className="flex h-[1020px] overflow-hidden">
        <BackgroundLeft />
        <div className="z-10 flex w-[1860px] shrink-0 flex-col bg-[#ededed] shadow-[0_0_8px_rgba(0,0,0,0.55)]">
          <TitleBar />
          <MenuRow />
          <Ribbon />
          <Banner />
          <FormulaBar />
          <Sheet />
          <SheetTabs />
          <StatusBar />
        </div>
        <BackgroundRight />
      </div>
      <Taskbar />
    </div>
  );
}
